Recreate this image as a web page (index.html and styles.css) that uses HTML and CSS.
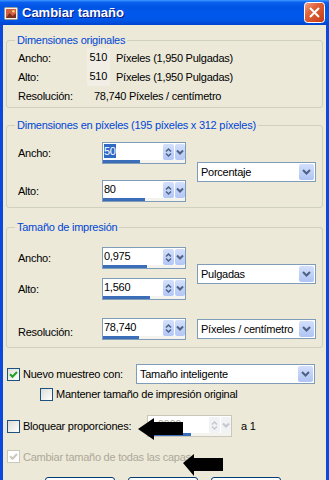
FILE: index.html
```html
<!DOCTYPE html>
<html lang="es">
<head>
    <meta charset="UTF-8">
    <meta name="viewport" content="width=device-width, initial-scale=1.0">
    <title>Cambiar tamaño</title>
    <link rel="stylesheet" href="styles.css">
</head>
<body>
    <div class="window">
        <div class="titlebar">
            <svg class="app-icon" viewBox="0 0 16 16" width="16" height="16">
                <rect x="1.5" y="2.5" width="13" height="12" rx="1" fill="#F4F1EA" stroke="#9A9A9A"/>
                <rect x="3" y="4" width="10" height="9" fill="#D0603F"/>
                <path d="M3 13 L6.5 8 L9.5 11 L13 8.5 L13 13 Z" fill="#7A2E1C"/>
                <circle cx="10.5" cy="6.3" r="1.3" fill="#F6D27A"/>
            </svg>
            <span class="title">Cambiar tamaño</span>
            <button class="close-btn" title="Cerrar">
                <svg viewBox="0 0 21 21" width="21" height="21">
                    <defs>
                        <linearGradient id="closeGrad" x1="0" y1="0" x2="1" y2="1">
                            <stop offset="0" stop-color="#F2A88E"/>
                            <stop offset="0.35" stop-color="#E2643C"/>
                            <stop offset="1" stop-color="#C23A14"/>
                        </linearGradient>
                    </defs>
                    <rect x="0.5" y="0.5" width="20" height="20" rx="3" fill="url(#closeGrad)" stroke="#FFFFFF"/>
                    <path d="M6 6 L15 15 M15 6 L6 15" stroke="#FFFFFF" stroke-width="2"/>
                </svg>
            </button>
        </div>

        <div class="content">
            <fieldset class="group">
                <legend>Dimensiones originales</legend>
                <div class="info-row">
                    <span class="info-label">Ancho:</span>
                    <span class="info-num">510</span>
                    <span class="info-unit">Píxeles (1,950 Pulgadas)</span>
                </div>
                <div class="info-row">
                    <span class="info-label">Alto:</span>
                    <span class="info-num">510</span>
                    <span class="info-unit">Píxeles (1,950 Pulgadas)</span>
                </div>
                <div class="info-row">
                    <span class="info-label">Resolución:</span>
                    <span class="info-value">78,740 Píxeles / centímetro</span>
                </div>
            </fieldset>

            <fieldset class="group group-pixels">
                <legend>Dimensiones en píxeles (195 píxeles x 312 píxeles)</legend>
                <div class="pair">
                    <div class="pair-fields">
                        <div class="field-row">
                            <span class="field-label">Ancho:</span>
                            <div class="spin">
                                <div class="spin-main">
                                    <span class="spin-value"><span class="sel">50</span></span>
                                    <span class="spin-btn spin-updown">
                                        <svg width="7" height="11" viewBox="0 0 7 11"><path d="M1 4.5 L3.5 2 L6 4.5 M1 6.5 L3.5 9 L6 6.5" fill="none" stroke="#4D6185" stroke-width="1.5"/></svg>
                                    </span>
                                    <span class="spin-btn spin-drop">
                                        <svg width="8" height="6" viewBox="0 0 8 6"><path d="M1 1.5 L4 4.5 L7 1.5" fill="none" stroke="#4D6185" stroke-width="2"/></svg>
                                    </span>
                                </div>
                                <div class="spin-bar"><div class="spin-fill" style="width: 37px"></div></div>
                            </div>
                        </div>
                        <div class="field-row">
                            <span class="field-label">Alto:</span>
                            <div class="spin">
                                <div class="spin-main">
                                    <span class="spin-value">80</span>
                                    <span class="spin-btn spin-updown">
                                        <svg width="7" height="11" viewBox="0 0 7 11"><path d="M1 4.5 L3.5 2 L6 4.5 M1 6.5 L3.5 9 L6 6.5" fill="none" stroke="#4D6185" stroke-width="1.5"/></svg>
                                    </span>
                                    <span class="spin-btn spin-drop">
                                        <svg width="8" height="6" viewBox="0 0 8 6"><path d="M1 1.5 L4 4.5 L7 1.5" fill="none" stroke="#4D6185" stroke-width="2"/></svg>
                                    </span>
                                </div>
                                <div class="spin-bar"><div class="spin-fill" style="width: 42px"></div></div>
                            </div>
                        </div>
                    </div>
                    <div class="combo">
                        <span class="combo-text">Porcentaje</span>
                        <span class="combo-btn">
                            <svg width="9" height="6" viewBox="0 0 9 6"><path d="M1 1 L4.5 4.5 L8 1" fill="none" stroke="#4D6185" stroke-width="2"/></svg>
                        </span>
                    </div>
                </div>
            </fieldset>

            <fieldset class="group group-print">
                <legend>Tamaño de impresión</legend>
                <div class="pair">
                    <div class="pair-fields pair-tight">
                        <div class="field-row">
                            <span class="field-label">Ancho:</span>
                            <div class="spin">
                                <div class="spin-main">
                                    <span class="spin-value">0,975</span>
                                    <span class="spin-btn spin-updown">
                                        <svg width="7" height="11" viewBox="0 0 7 11"><path d="M1 4.5 L3.5 2 L6 4.5 M1 6.5 L3.5 9 L6 6.5" fill="none" stroke="#4D6185" stroke-width="1.5"/></svg>
                                    </span>
                                    <span class="spin-btn spin-drop">
                                        <svg width="8" height="6" viewBox="0 0 8 6"><path d="M1 1.5 L4 4.5 L7 1.5" fill="none" stroke="#4D6185" stroke-width="2"/></svg>
                                    </span>
                                </div>
                                <div class="spin-bar"><div class="spin-fill" style="width: 44px"></div></div>
                            </div>
                        </div>
                        <div class="field-row">
                            <span class="field-label">Alto:</span>
                            <div class="spin">
                                <div class="spin-main">
                                    <span class="spin-value">1,560</span>
                                    <span class="spin-btn spin-updown">
                                        <svg width="7" height="11" viewBox="0 0 7 11"><path d="M1 4.5 L3.5 2 L6 4.5 M1 6.5 L3.5 9 L6 6.5" fill="none" stroke="#4D6185" stroke-width="1.5"/></svg>
                                    </span>
                                    <span class="spin-btn spin-drop">
                                        <svg width="8" height="6" viewBox="0 0 8 6"><path d="M1 1.5 L4 4.5 L7 1.5" fill="none" stroke="#4D6185" stroke-width="2"/></svg>
                                    </span>
                                </div>
                                <div class="spin-bar"><div class="spin-fill" style="width: 47px"></div></div>
                            </div>
                        </div>
                    </div>
                    <div class="combo">
                        <span class="combo-text">Pulgadas</span>
                        <span class="combo-btn">
                            <svg width="9" height="6" viewBox="0 0 9 6"><path d="M1 1 L4.5 4.5 L8 1" fill="none" stroke="#4D6185" stroke-width="2"/></svg>
                        </span>
                    </div>
                </div>
                <div class="field-row resolution-row">
                    <span class="field-label label-low">Resolución:</span>
                    <div class="spin">
                        <div class="spin-main">
                            <span class="spin-value">78,740</span>
                            <span class="spin-btn spin-updown">
                                <svg width="7" height="11" viewBox="0 0 7 11"><path d="M1 4.5 L3.5 2 L6 4.5 M1 6.5 L3.5 9 L6 6.5" fill="none" stroke="#4D6185" stroke-width="1.5"/></svg>
                            </span>
                            <span class="spin-btn spin-drop">
                                <svg width="8" height="6" viewBox="0 0 8 6"><path d="M1 1.5 L4 4.5 L7 1.5" fill="none" stroke="#4D6185" stroke-width="2"/></svg>
                            </span>
                        </div>
                        <div class="spin-bar"><div class="spin-fill" style="width: 36px"></div></div>
                    </div>
                    <div class="combo">
                        <span class="combo-text">Píxeles / centímetro</span>
                        <span class="combo-btn">
                            <svg width="9" height="6" viewBox="0 0 9 6"><path d="M1 1 L4.5 4.5 L8 1" fill="none" stroke="#4D6185" stroke-width="2"/></svg>
                        </span>
                    </div>
                </div>
            </fieldset>

            <div class="options">
                <div class="opt-row opt-resample">
                    <span class="check">
                        <svg width="9" height="9" viewBox="0 0 9 9"><path d="M1 4.2 L3.5 6.7 L8 2" fill="none" stroke="#21A121" stroke-width="2"/></svg>
                    </span>
                    <span class="opt-label">Nuevo muestreo con:</span>
                    <div class="combo combo-wide">
                        <span class="combo-text">Tamaño inteligente</span>
                        <span class="combo-btn">
                            <svg width="9" height="6" viewBox="0 0 9 6"><path d="M1 1 L4.5 4.5 L8 1" fill="none" stroke="#4D6185" stroke-width="2"/></svg>
                        </span>
                    </div>
                </div>
                <div class="opt-row opt-keep">
                    <span class="check"></span>
                    <span class="opt-label">Mantener tamaño de impresión original</span>
                </div>
                <div class="opt-row opt-lock">
                    <span class="check"></span>
                    <span class="opt-label">Bloquear proporciones:</span>
                    <div class="spin spin-disabled">
                        <div class="spin-main">
                            <span class="spin-value">1,0000</span>
                            <span class="spin-btn spin-updown">
                                <svg width="7" height="11" viewBox="0 0 7 11"><path d="M1 4.5 L3.5 2 L6 4.5 M1 6.5 L3.5 9 L6 6.5" fill="none" stroke="#C3C7CF" stroke-width="1.5"/></svg>
                            </span>
                            <span class="spin-btn spin-drop">
                                <svg width="8" height="6" viewBox="0 0 8 6"><path d="M1 1.5 L4 4.5 L7 1.5" fill="none" stroke="#C3C7CF" stroke-width="2"/></svg>
                            </span>
                        </div>
                        <div class="spin-bar"><div class="spin-fill" style="width: 43px"></div></div>
                    </div>
                    <span class="ratio-suffix">a 1</span>
                </div>
                <div class="opt-row opt-all">
                    <span class="check check-disabled">
                        <svg width="9" height="9" viewBox="0 0 9 9"><path d="M1 4.2 L3.5 6.7 L8 2" fill="none" stroke="#CAC8BB" stroke-width="2"/></svg>
                    </span>
                    <span class="opt-label">Cambiar tamaño de todas las capas</span>
                </div>
                <!-- los botones quedan cortados por el borde inferior -->
                <div class="dialog-buttons">
                    <button class="dlg-btn" aria-label="Aceptar"></button>
                    <button class="dlg-btn" aria-label="Cancelar"></button>
                    <button class="dlg-btn" aria-label="Ayuda"></button>
                </div>
            </div>
        </div>

        <!-- flechas de anotación -->
        <svg class="pointer pointer-lock" width="45" height="22" viewBox="0 0 45 22">
            <polygon points="0,11 16,0 16,4 45,4 45,17 16,17 16,22" fill="#000000"/>
        </svg>
        <svg class="pointer pointer-layers" width="40" height="22" viewBox="0 0 40 22">
            <polygon points="0,9 11,0 11,4 40,4 40,17 11,17 11,22" fill="#000000"/>
        </svg>
    </div>
</body>
</html>
```

FILE: styles.css
```css
* {
    box-sizing: border-box;
}

body {
    margin: 0;
    font-family: "Liberation Sans", Arial, sans-serif;
    font-size: 11px;
    letter-spacing: -0.25px;
    color: #000000;
    background: #ECE9D8;
}

.window {
    position: relative;
    width: 329px;
    height: 480px;
    overflow: hidden;
    background: #ECE9D8;
}

/* barra de título */
.titlebar {
    height: 25px;
    display: flex;
    align-items: center;
    padding-left: 3px;
    background: linear-gradient(to bottom, #3D95FF 0%, #0A5FEF 10%, #0054E3 28%, #0058EE 55%, #0055E5 82%, #0043CF 100%);
}

.app-icon {
    flex-shrink: 0;
}

.title {
    margin-left: 3px;
    color: #ffffff;
    font-size: 13px;
    font-weight: bold;
    letter-spacing: 0;
    text-shadow: 1px 1px #0A1883;
}

.close-btn {
    display: block;
    margin-left: auto;
    margin-right: 4px;
    width: 21px;
    height: 21px;
    padding: 0;
    border: none;
    background: none;
}

.close-btn svg {
    display: block;
}

.content {
    height: 455px;
    padding-top: 9px;
    border-left: 3px solid #0B48DC;
    border-right: 3px solid #0B48DC;
}

/* grupos */
.group {
    margin: 0 3px;
    padding: 1px 5px 2px 11px;
    border: 1px solid #D0D0BF;
    border-radius: 3px;
    min-width: 0;
}

.group legend {
    padding: 0 2px;
    margin-left: -3px;
    line-height: 13px;
    color: #0046D5;
}

.group-pixels {
    margin-top: 11px;
    padding-top: 10px;
    padding-bottom: 5px;
}

.group-print {
    margin-top: 13px;
    padding-top: 13px;
    padding-bottom: 7px;
}

.info-row {
    display: flex;
    align-items: center;
    height: 19px;
}

.info-label {
    width: 69px;
}

.info-num {
    width: 23px;
    height: 19px;
    line-height: 19px;
    padding-right: 3px;
    text-align: right;
    background: #F1EFE5;
}

.info-unit {
    margin-left: 6px;
}

.info-value {
    margin-left: 7px;
}

.pair {
    display: flex;
    align-items: center;
}

.pair-fields {
    display: flex;
    flex-direction: column;
    gap: 16px;
}

.pair-tight {
    gap: 9px;
}

.field-row {
    display: flex;
    align-items: center;
}

.field-label {
    width: 84px;
}

.label-low {
    padding-top: 5px;
}

.resolution-row {
    margin-top: 18px;
}

/* control numérico */
.spin {
    width: 84px;
    height: 22px;
    border: 1px solid #7F9DB9;
    background: #ffffff;
    display: flex;
    flex-direction: column;
    flex-shrink: 0;
}

.spin-main {
    display: flex;
    height: 17px;
}

.spin-value {
    flex: 1;
    padding-left: 1px;
    line-height: 16px;
}

.sel {
    background: #316AC5;
    color: #ffffff;
    padding: 1px 0;
}

.spin-btn {
    display: flex;
    align-items: center;
    justify-content: center;
    margin-top: 1px;
    margin-left: 1px;
    border-radius: 2px;
    background: linear-gradient(to bottom, #D3DFFC, #B3C7F5);
}

.spin-updown {
    width: 11px;
}

.spin-drop {
    width: 10px;
}

.spin-bar {
    height: 3px;
    background: #F4F3EE;
}

.spin-fill {
    height: 3px;
    background: #3B6DB9;
}

.spin-disabled {
    width: 85px;
    border-color: #C9C7BA;
    color: #ACA899;
}

.spin-disabled .spin-btn {
    background: #F1F2F4;
}

/* desplegable */
.combo {
    width: 119px;
    height: 20px;
    margin-left: 11px;
    border: 1px solid #7F9DB9;
    background: #ffffff;
    display: flex;
    align-items: center;
}

.combo-text {
    flex: 1;
    min-width: 0;
    padding-left: 3px;
    white-space: nowrap;
    overflow: hidden;
}

.combo-btn {
    width: 15px;
    height: 16px;
    margin: 0 1px;
    flex-shrink: 0;
    display: flex;
    align-items: center;
    justify-content: center;
    border-radius: 2px;
    background: linear-gradient(to bottom, #D3DFFC, #AFC4F4);
}

.combo-wide {
    width: 179px;
    margin-left: 0;
}

/* opciones inferiores */
.options {
    padding-left: 4px;
}

.opt-row {
    display: flex;
    align-items: center;
}

.check {
    width: 13px;
    height: 13px;
    flex-shrink: 0;
    display: flex;
    align-items: center;
    justify-content: center;
    border: 1px solid #1C5180;
    background: linear-gradient(135deg, #DCDCD7, #ffffff);
}

.check-disabled {
    border-color: #CAC8BB;
    background: #ffffff;
}

.opt-label {
    margin-left: 3px;
}

.opt-resample {
    margin-top: 16px;
    height: 20px;
}

.opt-resample .opt-label {
    width: 113px;
}

.opt-keep {
    margin-top: 2px;
    height: 16px;
    padding-left: 33px;
}

.opt-lock {
    margin-top: 13px;
    height: 22px;
}

.opt-lock .opt-label {
    width: 124px;
}

.ratio-suffix {
    margin-left: 9px;
}

.opt-all {
    margin-top: 12px;
    height: 15px;
    color: #ACA899;
}

.dialog-buttons {
    display: flex;
    gap: 13px;
    margin-top: 13px;
    padding-left: 38px;
}

.dlg-btn {
    width: 70px;
    height: 23px;
    flex-shrink: 0;
    border: 1px solid #003C74;
    border-radius: 3px;
    background: linear-gradient(to bottom, #ffffff, #ECEBE6);
}

.pointer {
    position: absolute;
}

.pointer-lock {
    left: 138px;
    top: 418px;
}

.pointer-layers {
    left: 183px;
    top: 454px;
}
```
